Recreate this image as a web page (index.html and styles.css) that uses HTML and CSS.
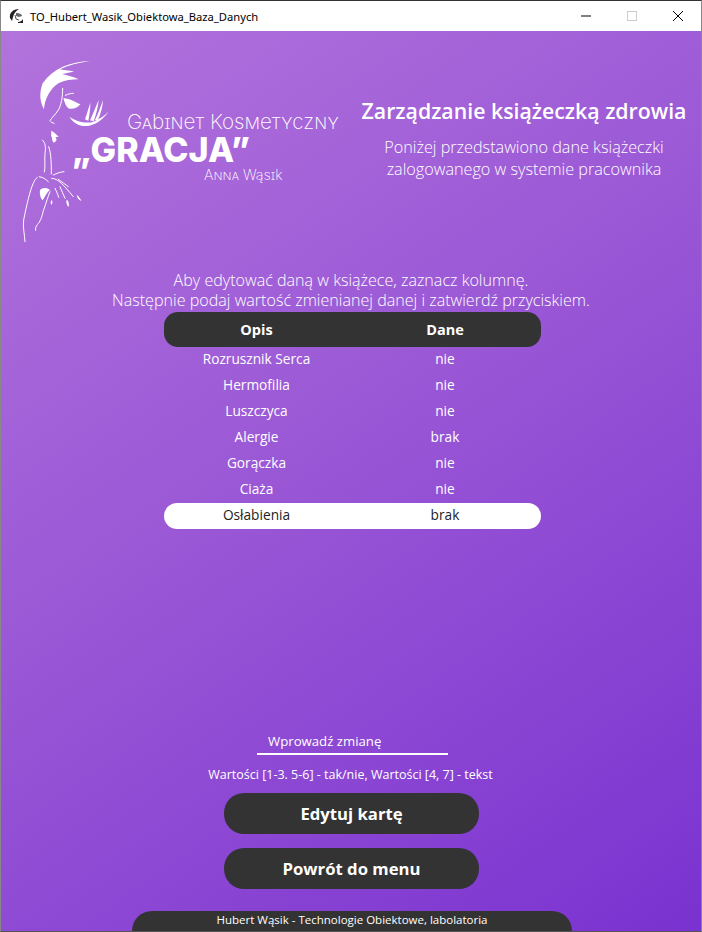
FILE: index.html
```html
<!DOCTYPE html>
<html lang="pl">
<head>
<meta charset="utf-8">
<title>TO_Hubert_Wasik_Obiektowa_Baza_Danych</title>
<link rel="stylesheet" href="styles.css">
</head>
<body>
<div class="window">
  <header class="titlebar">
    <svg class="app-icon" viewBox="0 0 16 16"><path d="M1 10C0 5 4 1 10 1 7 3 5 5 4 9L3 13z" fill="#222"/><path d="M7 5c3 0 6 1 6 3l-3 1-3-1z" fill="#666"/><path d="M9 14c2 0 4-1 5-3l0 4-5 0z" fill="#222"/><path d="M6 7l1 4 3 1" fill="none" stroke="#555"/></svg>
    <span class="app-title">TO_Hubert_Wasik_Obiektowa_Baza_Danych</span>
    <div class="controls">
      <svg class="ctl" viewBox="0 0 46 30"><path d="M18 15h10" stroke="#000" fill="none"/></svg>
      <svg class="ctl" viewBox="0 0 46 30"><rect x="18.5" y="10.500" width="9" height="9" stroke="#ccc" fill="none"/></svg>
      <svg class="ctl" viewBox="0 0 46 30"><path d="M18 10l10 10M28 10l-10 10" stroke="#000" fill="none"/></svg>
    </div>
  </header>
  <main class="content">
    <section class="top">
      <div class="logo">
        <svg class="figure" viewBox="0 0 330 600">
          <g fill="#fff">
            <path d="M240 33C180 35 130 55 98 100 88 125 88 155 102 178 104 150 118 118 145 100 165 90 185 88 206 88 190 80 172 76 156 72 170 70 180 68 192 64 175 62 160 60 150 58 175 46 205 38 240 33z"/>
            <path d="M160 145C170 143 190 152 211 163 205 172 192 178 178 176 168 172 165 160 160 145z"/>
            <path d="M178 200C195 212 225 222 248 216 268 208 285 198 296 184 282 206 262 222 238 227 212 232 190 220 178 200z"/>
            <path d="M225 208C232 188 236 172 241 158 241 178 238 196 235 212zM240 211C250 190 258 168 266 150 264 172 258 195 251 214zM255 210C265 190 272 170 279 150 278 172 272 192 264 210z"/>
            <path d="M124 242C132 245 140 255 146 260L136 262C142 268 140 275 131 278 124 268 128 262 123 258 126 252 122 246 124 242z"/>
            <path d="M90 420C96 414 108 410 120 420 112 425 108 435 98 451 94 447 88 438 90 420z"/>
            <path d="M200 435C206 438 212 447 214 453 206 450 202 445 200 435zM170 449C176 452 178 460 176 471 170 465 167 456 170 449zM125 450C128 453 128 460 125 464 121 462 121 455 125 450z"/>
          </g>
          <g fill="none" stroke="#fff" stroke-width="3" stroke-linecap="round" stroke-linejoin="round">
            <path d="M158 115C158 140 154 165 145 180 135 195 125 203 120 212 122 216 128 219 132 220"/>
            <path d="M166 136C174 132 182 130 190 130"/>
            <path d="M97 270C106 278 108 290 105 310 103 335 107 350 103 366"/>
            <path d="M116 290C124 310 124 345 124 372"/>
            <path d="M45 575C44 555 38 530 41 510 50 465 60 420 70 400 74 390 78 385 82 382"/>
            <path d="M120 425C112 445 105 470 100 482 95 505 90 515 82 524 77 530 76 535 77 541"/>
            <path d="M88 380C100 382 108 388 115 395"/>
            <path d="M125 385C145 385 160 405 190 440M130 375C140 370 150 366 162 365M145 388C155 395 168 405 175 410M150 410C155 420 160 435 165 445M135 415C140 425 144 435 146 442"/>
          </g>
        </svg>
        <div class="logo-text">
          <div class="logo-line1">Gabinet Kosmetyczny</div>
          <div class="logo-line2">„GRACJA”</div>
          <div class="logo-line3">Anna Wąsik</div>
        </div>
      </div>
      <div class="heading">
        <h1>Zarządzanie książeczką zdrowia</h1>
        <p>Poniżej przedstawiono dane książeczki<br>zalogowanego w systemie pracownika</p>
      </div>
    </section>
    <p class="instructions">Aby edytować daną w książece, zaznacz kolumnę.<br>Następnie podaj wartość zmienianej danej i zatwierdź przyciskiem.</p>
    <div class="table">
      <div class="row head"><span>Opis</span><span>Dane</span></div>
      <div class="row"><span>Rozrusznik Serca</span><span>nie</span></div>
      <div class="row"><span>Hermofilia</span><span>nie</span></div>
      <div class="row"><span>Luszczyca</span><span>nie</span></div>
      <div class="row"><span>Alergie</span><span>brak</span></div>
      <div class="row"><span>Gorączka</span><span>nie</span></div>
      <div class="row"><span>Ciaża</span><span>nie</span></div>
      <div class="row selected"><span>Osłabienia</span><span>brak</span></div>
    </div>
    <div class="form">
      <div class="field">Wprowadź zmianę</div>
      <p class="hint">Wartości [1-3. 5-6] - tak/nie, Wartości [4, 7] - tekst</p>
      <button class="btn">Edytuj kartę</button>
      <button class="btn">Powrót do menu</button>
    </div>
    <footer class="footer">Hubert Wąsik - Technologie Obiektowe, labolatoria</footer>
  </main>
</div>
</body>
</html>
```
FILE: styles.css
```css
* { box-sizing: border-box; }
html, body { margin: 0; padding: 0; height: 100%; overflow: hidden; }
body { font-family: "Open Sans", "Noto Sans", sans-serif; color: #fff; }
.window {
  width: 702px; height: 932px; display: flex; flex-direction: column;
  border-top: 1px solid #333; border-left: 1px solid #888; border-right: 1px solid #888;
  border-bottom: 1px solid #555;
}
.titlebar { height: 30px; background: #fff; display: flex; align-items: center; color: #000; flex: none; }
.app-icon { width: 16px; height: 16px; margin-left: 8px; }
.app-title { margin-left: 5px; font-family: "Noto Sans", sans-serif; font-size: 11.2px; }
.controls { margin-left: auto; display: flex; }
.ctl { width: 46px; height: 30px; display: block; }
.content {
  flex: 1; display: flex; flex-direction: column; align-items: center; min-height: 0;
  background: linear-gradient(145deg, #b273dc 0%, #9a58d6 45%, #7a32d0 100%);
}
.top { width: 100%; height: 234px; display: flex; flex: none; }
.logo { position: relative; width: 346px; flex: none; }
.figure { position: absolute; left: 9px; top: 19px; width: 110px; height: 200px; }
.logo-text { position: absolute; left: 0; top: 0; width: 100%; height: 100%; font-family: Inter, sans-serif; }
.logo-line1 { position: absolute; left: 126px; top: 81px; font-size: 20.6px; line-height: 20px; font-weight: 200; font-variant: small-caps; white-space: nowrap; }
.logo-line2 { position: absolute; left: 71px; top: 104px; font-size: 34px; font-weight: 800; white-space: nowrap; line-height: 30px; }
.logo-line3 { position: absolute; left: 203px; top: 137px; font-size: 14.4px; line-height: 14px; font-weight: 200; font-variant: small-caps; white-space: nowrap; }
.heading { flex: 1; text-align: center; padding-top: 65px; }
.heading h1 { margin: 0; font-size: 21.3px; line-height: 30px; font-weight: 600; }
.heading p { margin: 10px 0 0; font-size: 16.2px; line-height: 22px; font-weight: 300; }
.instructions { margin: 5px 0 0; text-align: center; font-size: 16.1px; line-height: 20px; font-weight: 300; flex: none; }
.table { width: 377px; margin-top: 2px; margin-left: 2px; flex: none; font-size: 13.7px; }
.row { height: 26px; padding-bottom: 4px; display: grid; grid-template-columns: 186px 1fr; align-items: center; text-align: center; }
.row.head { height: 35px; padding-bottom: 0; background: #333; border-radius: 14px; font-weight: 700; font-size: 14.5px; }
.row.selected { background: #fff; color: #222; border-radius: 13px; }
.form { width: 100%; margin-top: auto; display: flex; flex-direction: column; align-items: center; flex: none; }
.field { width: 191px; height: 25px; margin-left: 3px; border-bottom: 2px solid #fff; padding-left: 11px; font-size: 13.2px; line-height: 22px; }
.hint { margin: 11px 1px 0 0; font-size: 12.5px; line-height: 18px; }
.btn {
  width: 255px; height: 41px; margin: 9px 0 0 1px; border: 0; border-radius: 20px; background: #333; color: #fff;
  font-family: inherit; font-size: 16.7px; font-weight: 700; padding: 0;
}
.btn + .btn { margin-top: 14px; }
.footer {
  width: 440px; height: 20px; margin-top: 22px; margin-left: 2px; flex: none; background: #333; border-radius: 20px 20px 0 0;
  text-align: center; font-size: 11.5px; line-height: 17px;
}
```
